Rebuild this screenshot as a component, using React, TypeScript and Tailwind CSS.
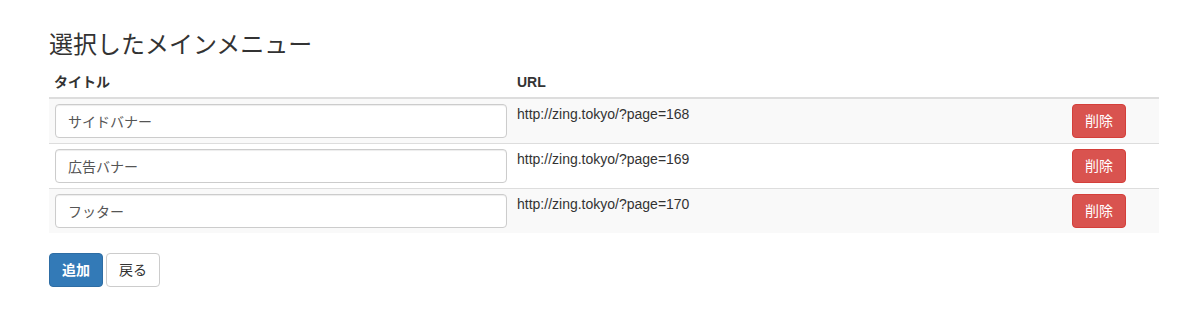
const font = { fontFamily: '"Liberation Sans", "Noto Sans CJK JP", sans-serif' };

const rows = [
  { title: 'サイドバナー', url: 'http://zing.tokyo/?page=168' },
  { title: '広告バナー', url: 'http://zing.tokyo/?page=169' },
  { title: 'フッター', url: 'http://zing.tokyo/?page=170' },
];

export default function App() {
  return (
    <div
      className="min-h-[320px] bg-white pl-[49px] pr-[35px] pt-[32px] text-[14px] leading-[20px] text-[#333]"
      style={font}
    >
      <h3 className="text-[24px] leading-[26px] font-normal">選択したメインメニュー</h3>
      <table className="mt-[9px] w-[1110px] table-fixed border-collapse">
        <thead>
          <tr className="border-b-2 border-[#ddd]">
            <th className="w-[462px] p-[5px] pl-[5px] text-left font-bold">タイトル</th>
            <th className="w-[556px] p-[5px] pl-[6px] text-left font-bold">URL</th>
            <th className="w-[92px] p-[5px]"></th>
          </tr>
        </thead>
        <tbody>
          {rows.map((r, i) => (
            <tr key={r.url} className={`${i % 2 === 0 ? 'bg-[#f9f9f9]' : 'bg-white'} ${i > 0 ? 'border-t border-[#ddd]' : ''}`}>
              <td className="p-[5px] pl-[6px] align-top">
                <input
                  defaultValue={r.title}
                  className="block h-[34px] w-[452px] rounded-[4px] border border-[#ccc] bg-white px-[12px] py-[6px] text-[14px] text-[#555] shadow-[inset_0_1px_1px_rgba(0,0,0,0.075)] outline-none"
                  style={font}
                />
              </td>
              <td className="p-[5px] pl-[6px] align-top">{r.url}</td>
              <td className="p-[5px] pl-[5px] align-top">
                <button className="h-[34px] rounded-[4px] border border-[#d43f3a] bg-[#d9534f] px-[12px] text-[14px] text-white">
                  削除
                </button>
              </td>
            </tr>
          ))}
        </tbody>
      </table>
      <div className="mt-[20px] flex gap-[3px]">
        <button className="h-[34px] rounded-[4px] border border-[#2e6da4] bg-[#337ab7] px-[12px] text-[14px] font-bold text-white">
          追加
        </button>
        <button className="h-[34px] rounded-[4px] border border-[#ccc] bg-white px-[12px] text-[14px] text-[#333]">
          戻る
        </button>
      </div>
    </div>
  );
}
